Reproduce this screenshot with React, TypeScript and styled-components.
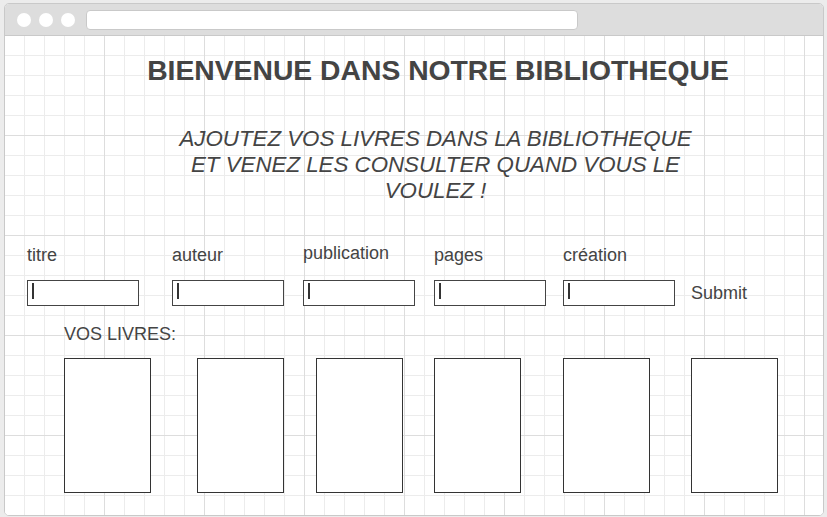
import React from "react";
import styled, { createGlobalStyle } from "styled-components";

const GlobalStyle = createGlobalStyle`
  body {
    margin: 0;
    background: #ececec;
    font-family: "Liberation Sans", Arial, sans-serif;
    color: #444;
  }
`;

const Window = styled.div`
  margin: 3px 0 0 4px;
  width: 818px;
  height: 511px;
  border: 1px solid #c9c9c9;
  border-radius: 5px;
  overflow: hidden;
  display: flex;
  flex-direction: column;
  background: #fff;
`;

const TitleBar = styled.div`
  height: 31px;
  flex-shrink: 0;
  background: #dddddd;
  border-bottom: 1px solid #c9c9c9;
  display: flex;
  align-items: center;
  padding-left: 12px;
  gap: 8px;
`;

const Dot = styled.span`
  width: 14px;
  height: 14px;
  border-radius: 50%;
  background: #fff;
`;

const UrlBar = styled.div`
  margin-left: 3px;
  width: 490px;
  height: 18px;
  background: #fff;
  border: 1px solid #c9c9c9;
  border-radius: 4px;
`;

const Canvas = styled.div`
  flex: 1;
  background-color: #fff;
  background-image: linear-gradient(to right, #dddddd 1px, transparent 1px),
    linear-gradient(to bottom, #dddddd 1px, transparent 1px),
    linear-gradient(to right, #ececec 1px, transparent 1px),
    linear-gradient(to bottom, #ececec 1px, transparent 1px);
  background-size: 100px 100px, 100px 100px, 20px 20px, 20px 20px;
  background-position: 99px 99px, 99px 99px, 19px 19px, 19px 19px;
  display: flex;
  flex-direction: column;
`;

const Header = styled.div`
  padding: 19px 0 0 48px;
  text-align: center;
`;

const Title = styled.h1`
  margin: 0;
  font-size: 28.3px;
  line-height: 30px;
  font-weight: bold;
  white-space: nowrap;
`;

const Subtitle = styled.p`
  margin: 41px 5px 0 0;
  font-size: 22.3px;
  line-height: 26px;
  font-style: italic;
  white-space: nowrap;
`;

const Form = styled.div`
  margin-top: 40px;
  padding-left: 22px;
  display: grid;
  grid-template-columns: 145px 131px 131px 129px 128px auto;
  grid-template-rows: 22px 26px;
  row-gap: 14px;
  align-items: center;
`;

const Label = styled.label<{ $lift?: number }>`
  font-size: 18px;
  line-height: 22px;
  position: relative;
  top: ${(p) => -(p.$lift || 0)}px;
`;

const Field = styled.div`
  width: 112px;
  height: 26px;
  box-sizing: border-box;
  border: 1px solid #444;
  background: #fff;
  display: flex;
  align-items: flex-start;
  padding: 2px 0 0 4px;
`;

const Caret = styled.span`
  width: 2px;
  height: 16px;
  background: #333;
`;

const SubmitText = styled.span`
  font-size: 18px;
  line-height: 22px;
`;

const Section = styled.div`
  padding-left: 59px;
`;

const SectionTitle = styled.div`
  margin-top: 17px;
  font-size: 18px;
  line-height: 22px;
`;

const Shelf = styled.div`
  margin-top: 13px;
  display: grid;
  grid-template-columns: 133px 119px 118px 129px 128px 87px;
`;

const Book = styled.div`
  width: 87px;
  height: 135px;
  box-sizing: border-box;
  border: 1px solid #333;
  background: #fff;
`;

const fields = [
  { name: "titre", lift: 0 },
  { name: "auteur", lift: 0 },
  { name: "publication", lift: 2 },
  { name: "pages", lift: 0 },
  { name: "création", lift: 0 },
];

const App: React.FC = () => {
  return (
    <>
      <GlobalStyle />
      <Window>
        <TitleBar>
          <Dot />
          <Dot />
          <Dot />
          <UrlBar />
        </TitleBar>
        <Canvas>
          <Header>
            <Title>BIENVENUE DANS NOTRE BIBLIOTHEQUE</Title>
            <Subtitle>
              AJOUTEZ VOS LIVRES DANS LA BIBLIOTHEQUE
              <br />
              ET VENEZ LES CONSULTER QUAND VOUS LE
              <br />
              VOULEZ !
            </Subtitle>
          </Header>
          <Form>
            {fields.map((f) => (
              <Label key={f.name} $lift={f.lift}>
                {f.name}
              </Label>
            ))}
            <span />
            {fields.map((f) => (
              <Field key={f.name}>
                <Caret />
              </Field>
            ))}
            <SubmitText>Submit</SubmitText>
          </Form>
          <Section>
            <SectionTitle>VOS LIVRES:</SectionTitle>
            <Shelf>
              {[0, 1, 2, 3, 4, 5].map((i) => (
                <Book key={i} />
              ))}
            </Shelf>
          </Section>
        </Canvas>
      </Window>
    </>
  );
};

export default App;
